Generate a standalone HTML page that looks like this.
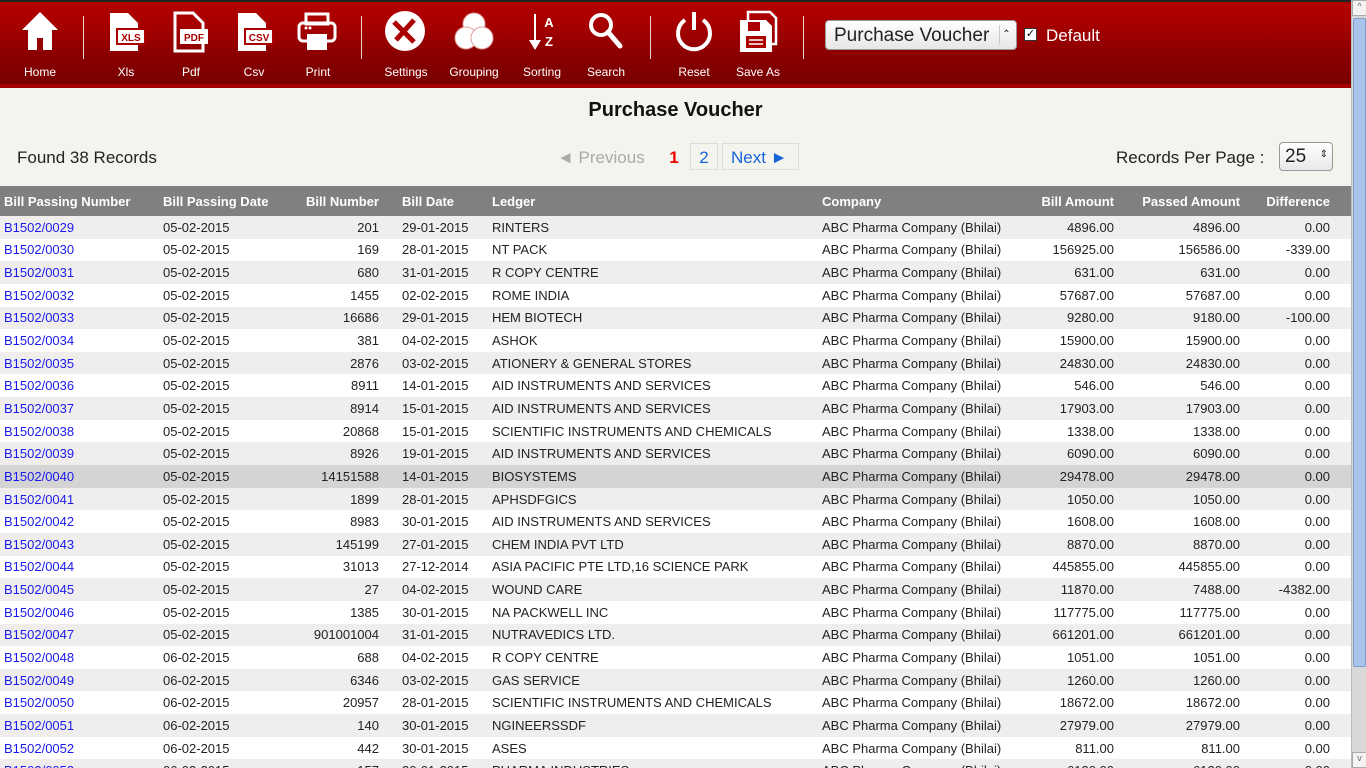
<!DOCTYPE html>
<html style="overflow:hidden;height:768px"><head><meta charset="utf-8"><style>
*{margin:0;padding:0;box-sizing:border-box}
body{width:1366px;height:768px;overflow:hidden;font-family:"Liberation Sans",sans-serif;background:#f4f4ef;position:relative}
#bar{position:absolute;left:0;top:0;width:1351px;height:88px;background:linear-gradient(#b30000 0,#a80000 25%,#8c0000 60%,#780000 82px,#a50000 82px,#a50000 88px);border-top:2px solid #222}
.tb{position:absolute;top:0;width:64px;text-align:center;color:#fff;font-size:12px}
.tb svg{position:absolute;left:50%;transform:translateX(-50%);top:8px}
.tb span{position:absolute;top:63px;left:0;width:100%;text-align:center}
.sep{position:absolute;top:14px;width:1px;height:43px;background:#f0d0d0}
#sel{position:absolute;left:825px;top:18px;width:192px;height:30px;background:linear-gradient(#fff,#e6e6e6);border:1px solid #999;border-radius:4px;font-size:19px;color:#222;padding:4px 8px}
#sel i{position:absolute;right:3px;top:4px;width:14px;height:20px;border-left:1px solid #ccc;font-style:normal;font-size:10px;text-align:center;line-height:20px}
#chk{position:absolute;left:1024px;top:26px;width:13px;height:13px;background:#fff;border:1px solid #333;font-size:11px;line-height:11px;text-align:center;color:#000}
#def{position:absolute;left:1046px;top:24px;color:#fff;font-size:17px}
#title{position:absolute;left:0;width:1351px;top:99px;text-align:center;font-size:20px;font-weight:bold;color:#111}
#found{position:absolute;left:17px;top:148px;font-size:17px;color:#222}
.pg{position:absolute;top:144px;font-size:17px}
#rpp{position:absolute;left:1116px;top:148px;font-size:17px;color:#222}
#rsel{position:absolute;left:1279px;top:142px;width:54px;height:29px;border:1px solid #999;border-radius:4px;background:linear-gradient(#fff,#e8e8e8);font-size:19px;padding:3px 5px;color:#222}
table{position:absolute;left:0;top:186px;width:1351px;border-collapse:collapse;font-size:13px;table-layout:fixed}
th{background:#808080;color:#fff;height:30px;text-align:left;font-weight:bold;padding:0 4px;white-space:nowrap;overflow:hidden}
td{height:22.65px;padding:0 4px;color:#222;white-space:nowrap;overflow:hidden}
tr:nth-child(odd) td{background:#f0eeed}
tr:nth-child(even) td{background:#fff}
tr.h td{background:#d4d4d4!important}
.r{text-align:right!important}
.p3{padding-right:19px}
td a{color:#1a1aee;text-decoration:none}
#sb{position:absolute;left:1351px;top:0;width:15px;height:768px;background:#d8d8d8;border-left:1px solid #bbb}
#thumb{position:absolute;left:1px;top:18px;width:13px;height:649px;background:#a8c4ea;border:1px solid #7d9ccc;border-radius:2px}
.ar{position:absolute;left:0;width:15px;height:16px;background:#f3f3f3;border:1px solid #aaa;font-size:9px;text-align:center;color:#666}
</style></head><body>
<div id="bar">
<div class="tb" style="left:8px"><svg width="40" height="44" viewBox="0 0 40 44"><path d="M20 2L2 20h6v20h9V28h6v12h9V20h6z" fill="#fff"/></svg><span>Home</span></div>
<div class="sep" style="left:83px"></div>
<div class="tb" style="left:94px"><svg width="44" height="44" viewBox="0 0 44 44"><path d="M6 3h18l10 10v28H6z" fill="#fff"/><rect x="13" y="19" width="28" height="15" fill="#fff" stroke="#a00" stroke-width="2"/><text x="27" y="31" font-size="10" font-weight="bold" text-anchor="middle" fill="#a00" font-family="Liberation Sans">XLS</text></svg><span>Xls</span></div>
<div class="tb" style="left:159px"><svg width="44" height="44" viewBox="0 0 44 44"><path d="M6 3h18l10 10v28H6z" fill="none" stroke="#fff" stroke-width="3"/><rect x="11" y="19" width="28" height="15" fill="#fff"/><text x="25" y="31" font-size="10" font-weight="bold" text-anchor="middle" fill="#a00" font-family="Liberation Sans">PDF</text></svg><span>Pdf</span></div>
<div class="tb" style="left:222px"><svg width="44" height="44" viewBox="0 0 44 44"><path d="M6 3h18l10 10v28H6z" fill="#fff"/><rect x="13" y="19" width="28" height="15" fill="#fff" stroke="#a00" stroke-width="2"/><text x="27" y="31" font-size="10" font-weight="bold" text-anchor="middle" fill="#a00" font-family="Liberation Sans">CSV</text></svg><span>Csv</span></div>
<div class="tb" style="left:286px"><svg width="44" height="44" viewBox="0 0 44 44"><rect x="10" y="4" width="22" height="10" fill="none" stroke="#fff" stroke-width="3"/><rect x="3" y="13" width="36" height="18" rx="4" fill="none" stroke="#fff" stroke-width="3"/><rect x="11" y="24" width="20" height="16" fill="#fff"/><circle cx="10" cy="18" r="1.5" fill="#fff"/><circle cx="14" cy="18" r="1.5" fill="#fff"/></svg><span>Print</span></div>
<div class="sep" style="left:361px"></div>
<div class="tb" style="left:374px"><svg width="44" height="44" viewBox="0 0 44 44"><circle cx="21" cy="21" r="20" fill="#fff"/><path d="M10 12l20 20M30 10L12 30" stroke="#a00" stroke-width="5"/></svg><span>Settings</span></div>
<div class="tb" style="left:442px"><svg width="44" height="44" viewBox="0 0 44 44"><circle cx="22" cy="14" r="11" fill="#fff" stroke="#e0a0a0"/><circle cx="14" cy="28" r="11" fill="#fff" stroke="#e0a0a0"/><circle cx="30" cy="28" r="11" fill="#fff" stroke="#e0a0a0"/></svg><span>Grouping</span></div>
<div class="tb" style="left:510px"><svg width="44" height="44" viewBox="0 0 44 44"><path d="M14 4v26h-5l6 10 6-10h-5V4z" fill="#fff"/><text x="29" y="17" font-size="13" font-weight="bold" fill="#fff" font-family="Liberation Sans" text-anchor="middle">A</text><text x="29" y="36" font-size="13" font-weight="bold" fill="#fff" font-family="Liberation Sans" text-anchor="middle">Z</text></svg><span>Sorting</span></div>
<div class="tb" style="left:574px"><svg width="44" height="44" viewBox="0 0 44 44"><circle cx="17" cy="15" r="10" fill="none" stroke="#fff" stroke-width="4"/><path d="M24 22l12 14" stroke="#fff" stroke-width="5" stroke-linecap="round"/></svg><span>Search</span></div>
<div class="sep" style="left:650px"></div>
<div class="tb" style="left:662px"><svg width="44" height="44" viewBox="0 0 44 44"><path d="M13 10A16 16 0 1 0 31 10" fill="none" stroke="#fff" stroke-width="4"/><path d="M22 2v18" stroke="#fff" stroke-width="4"/></svg><span>Reset</span></div>
<div class="tb" style="left:726px"><svg width="44" height="44" viewBox="0 0 44 44"><path d="M12 2h22l6 6v26H12z" fill="none" stroke="#fff" stroke-width="2.5"/><path d="M4 10h26l6 6v26H4z" fill="#fff"/><rect x="10" y="26" width="20" height="12" fill="#a00"/><path d="M13 30h14M13 34h14" stroke="#fff" stroke-width="1.5"/><rect x="12" y="12" width="12" height="9" fill="#a00"/></svg><span>Save As</span></div>
<div class="sep" style="left:803px"></div>
<div id="sel">Purchase Voucher<i>&#8963;<br></i></div>
<div id="chk">✓</div><div id="def">Default</div>
</div>
<div id="title">Purchase Voucher</div>
<div id="found">Found 38 Records</div>
<div class="pg" style="left:557px;top:148px;color:#aaa">◄ Previous</div>
<div class="pg" style="left:662px;top:144px;width:24px;height:27px;color:#e00;text-align:center;padding-top:4px;font-weight:bold">1</div>
<div class="pg" style="left:690px;top:143px;width:28px;height:27px;border:1px solid #ddd;color:#1565d8;text-align:center;padding-top:4px">2</div>
<div class="pg" style="left:722px;top:143px;width:77px;height:27px;border:1px solid #ddd;color:#1565d8;padding:4px 0 0 8px">Next ►</div>
<div id="rpp">Records Per Page :</div>
<div id="rsel">25<span style="position:absolute;right:4px;top:6px;font-size:10px">⇕</span></div>
<table>
<colgroup><col style="width:159px"><col style="width:140px"><col style="width:99px"><col style="width:90px"><col style="width:330px"><col style="width:192px"><col style="width:108px"><col style="width:126px"><col style="width:90px"><col></colgroup>
<tr><th>Bill Passing Number</th><th>Bill Passing Date</th><th class="r p3">Bill Number</th><th>Bill Date</th><th>Ledger</th><th>Company</th><th class="r">Bill Amount</th><th class="r">Passed Amount</th><th class="r">Difference</th><th></th></tr>
<tbody id="tb"></tbody>
</table>
<div id="sb"><div class="ar" style="top:0">^</div><div id="thumb"></div><div class="ar" style="top:752px">v</div></div>
<script>
var d=[["0029","05-02-2015","201","29-01-2015","RINTERS","4896.00","4896.00","0.00"],
["0030","05-02-2015","169","28-01-2015","NT PACK","156925.00","156586.00","-339.00"],
["0031","05-02-2015","680","31-01-2015","R COPY CENTRE","631.00","631.00","0.00"],
["0032","05-02-2015","1455","02-02-2015","ROME INDIA","57687.00","57687.00","0.00"],
["0033","05-02-2015","16686","29-01-2015","HEM BIOTECH","9280.00","9180.00","-100.00"],
["0034","05-02-2015","381","04-02-2015","ASHOK","15900.00","15900.00","0.00"],
["0035","05-02-2015","2876","03-02-2015","ATIONERY &amp; GENERAL STORES","24830.00","24830.00","0.00"],
["0036","05-02-2015","8911","14-01-2015","AID INSTRUMENTS AND SERVICES","546.00","546.00","0.00"],
["0037","05-02-2015","8914","15-01-2015","AID INSTRUMENTS AND SERVICES","17903.00","17903.00","0.00"],
["0038","05-02-2015","20868","15-01-2015","SCIENTIFIC INSTRUMENTS AND CHEMICALS","1338.00","1338.00","0.00"],
["0039","05-02-2015","8926","19-01-2015","AID INSTRUMENTS AND SERVICES","6090.00","6090.00","0.00"],
["0040","05-02-2015","14151588","14-01-2015","BIOSYSTEMS","29478.00","29478.00","0.00"],
["0041","05-02-2015","1899","28-01-2015","APHSDFGICS","1050.00","1050.00","0.00"],
["0042","05-02-2015","8983","30-01-2015","AID INSTRUMENTS AND SERVICES","1608.00","1608.00","0.00"],
["0043","05-02-2015","145199","27-01-2015","CHEM INDIA PVT LTD","8870.00","8870.00","0.00"],
["0044","05-02-2015","31013","27-12-2014","ASIA PACIFIC PTE LTD,16 SCIENCE PARK","445855.00","445855.00","0.00"],
["0045","05-02-2015","27","04-02-2015","WOUND CARE","11870.00","7488.00","-4382.00"],
["0046","05-02-2015","1385","30-01-2015","NA PACKWELL INC","117775.00","117775.00","0.00"],
["0047","05-02-2015","901001004","31-01-2015","NUTRAVEDICS LTD.","661201.00","661201.00","0.00"],
["0048","06-02-2015","688","04-02-2015","R COPY CENTRE","1051.00","1051.00","0.00"],
["0049","06-02-2015","6346","03-02-2015","GAS SERVICE","1260.00","1260.00","0.00"],
["0050","06-02-2015","20957","28-01-2015","SCIENTIFIC INSTRUMENTS AND CHEMICALS","18672.00","18672.00","0.00"],
["0051","06-02-2015","140","30-01-2015","NGINEERSSDF","27979.00","27979.00","0.00"],
["0052","06-02-2015","442","30-01-2015","ASES","811.00","811.00","0.00"],
["0053","06-02-2015","157","30-01-2015","PHARMA INDUSTRIES","6120.00","6120.00","0.00"]];
var h="";d.forEach(function(r){h+='<tr'+(r[0]=="0040"?' class="h"':'')+'><td><a>B1502/'+r[0]+'</a></td><td>'+r[1]+'</td><td class="r p3">'+r[2]+'</td><td>'+r[3]+'</td><td>'+r[4]+'</td><td>ABC Pharma Company (Bhilai)</td><td class="r">'+r[5]+'</td><td class="r">'+r[6]+'</td><td class="r">'+r[7]+'</td><td></td></tr>';});
document.getElementById("tb").innerHTML=h;
</script>
</body></html>
